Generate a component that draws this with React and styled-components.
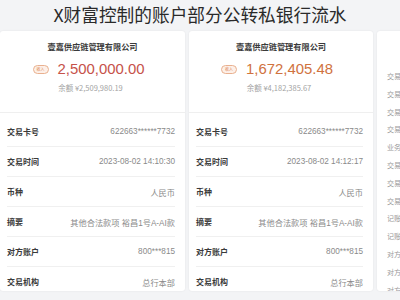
import React from 'react';
import styled, { createGlobalStyle } from 'styled-components';

const Global = createGlobalStyle`
  html, body {
    margin: 0;
    padding: 0;
    background: #f3f4f6;
    font-family: "Noto Sans CJK SC", "Liberation Sans", sans-serif;
  }
`;

const Page = styled.div`
  width: 400px;
  height: 300px;
  overflow: hidden;
  background: #f3f4f6;
`;

const Title = styled.h1`
  margin: 0;
  height: 31px;
  line-height: 29px;
  text-align: center;
  font-size: 17.7px;
  font-weight: 400;
  color: #2a2a2a;
`;

const Cards = styled.div`
  display: flex;
  gap: 4px;
  width: 600px;
`;

const Card = styled.section`
  flex: 0 0 ${p => p.$w}px;
  height: 260px;
  background: #fff;
  border-radius: 3px;
  box-shadow: 0 0 2px rgba(0, 0, 0, 0.08);
  overflow: hidden;
`;

const Head = styled.div`
  display: flex;
  flex-direction: column;
  align-items: center;
  padding: 9px 0 0;
  height: 72px;
  border-bottom: 1px solid #efefef;
`;

const Company = styled.div`
  font-size: 8.2px;
  line-height: 12px;
  font-weight: 700;
  color: #3a3a3a;
`;

const AmountRow = styled.div`
  display: flex;
  align-items: center;
  gap: 9px;
  margin-top: 7px;
  height: 20px;
  margin-left: -8px;
`;

const Badge = styled.span`
  display: inline-flex;
  align-items: center;
  justify-content: center;
  width: 14px;
  height: 7px;
  border: 1px solid #e9b08f;
  background: #fdf0e8;
  border-radius: 5px;
  font-size: 4px;
  color: #d9804f;
`;

const Amount = styled.span`
  font-family: "Liberation Sans", "Noto Sans", sans-serif;
  font-size: 14.9px;
  color: ${p => p.$color};
`;

const Balance = styled.div`
  margin-top: 4px;
  font-size: 7.5px;
  line-height: 10px;
  color: #a3a3a3;
  margin-left: -4px;
`;

const Rows = styled.div`
  padding: 4px 10px 0 7px;
`;

const Row = styled.div`
  display: flex;
  justify-content: space-between;
  align-items: center;
  height: 29px;
  border-bottom: 1px solid #f0f0f0;
`;

const Label = styled.span`
  font-size: 8px;
  font-weight: 700;
  color: #3a3a3a;
`;

const Value = styled.span`
  font-family: "Liberation Sans", "Noto Sans CJK SC", sans-serif;
  font-size: 8.2px;
  color: #8a8a8a;
`;

const SideList = styled.div`
  padding: 37px 0 0 10px;
`;

const SideItem = styled.div`
  font-size: 7px;
  line-height: 17.8px;
  color: #9a9a9a;
`;

const records = [
  {
    company: '壹嘉供应链管理有限公司',
    amount: '2,500,000.00',
    color: '#c6524a',
    balance: '¥2,509,980.19',
    time: '2023-08-02 14:10:30',
    w: 185,
  },
  {
    company: '壹嘉供应链管理有限公司',
    amount: '1,672,405.48',
    color: '#d0723e',
    balance: '¥4,182,385.67',
    time: '2023-08-02 14:12:17',
    w: 184,
  },
];

const sideLabels = [
  '交易卡号', '交易账号', '交易户名', '交易时间', '业务类型', '交易金额', '交易余额',
  '交易渠道', '记账日期', '记账流水', '对方账号', '对方户名', '对方行名',
];

const App = () => {
  return (
    <Page>
      <Global />
      <Title>X财富控制的账户部分公转私银行流水</Title>
      <Cards>
        {records.map((r) => {
          const rows = [
            ['交易卡号', '622663******7732'],
            ['交易时间', r.time],
            ['币种', '人民币'],
            ['摘要', '其他合法款项 裕昌1号A-AI款'],
            ['对方账户', '800***815'],
            ['交易机构', '总行本部'],
          ];
          return (
            <Card key={r.amount} $w={r.w}>
              <Head>
                <Company>{r.company}</Company>
                <AmountRow>
                  <Badge>收入</Badge>
                  <Amount $color={r.color}>{r.amount}</Amount>
                </AmountRow>
                <Balance>余额 {r.balance}</Balance>
              </Head>
              <Rows>
                {rows.map(([k, v]) => (
                  <Row key={k}>
                    <Label>{k}</Label>
                    <Value>{v}</Value>
                  </Row>
                ))}
              </Rows>
            </Card>
          );
        })}
        <Card $w={184}>
          <SideList>
            {sideLabels.map((t) => (
              <SideItem key={t}>{t}</SideItem>
            ))}
          </SideList>
        </Card>
      </Cards>
    </Page>
  );
};

export default App;
